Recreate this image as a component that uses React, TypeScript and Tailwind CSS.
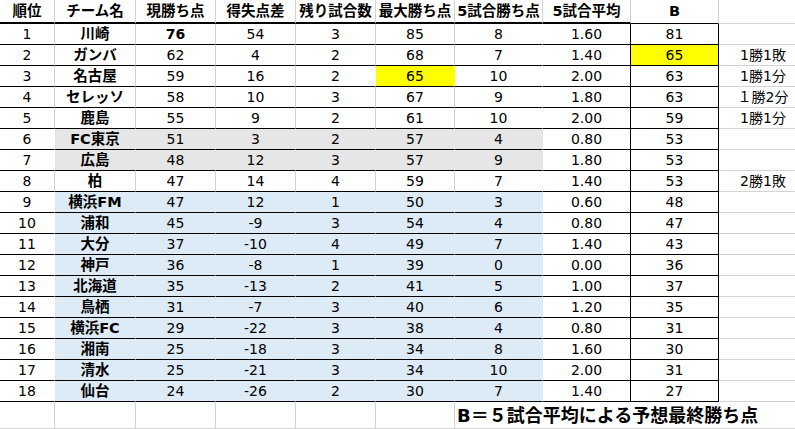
import React from 'react';

type Fill = 'white' | 'grey' | 'blue' | 'yellow';

interface TeamRow {
  rank: number;
  team: string;
  points: number;
  goalDiff: number;
  remaining: number;
  maxPoints: number;
  last5Points: number;
  last5Avg: string;
  projected: number;
  note?: string;
  fill: Fill;
  boldPoints?: boolean;
  yellowMax?: boolean;
  yellowProjected?: boolean;
}

const rows: TeamRow[] = [
  { rank: 1, team: '川崎', points: 76, goalDiff: 54, remaining: 3, maxPoints: 85, last5Points: 8, last5Avg: '1.60', projected: 81, fill: 'white', boldPoints: true },
  { rank: 2, team: 'ガンバ', points: 62, goalDiff: 4, remaining: 2, maxPoints: 68, last5Points: 7, last5Avg: '1.40', projected: 65, note: '1勝1敗', fill: 'white', yellowProjected: true },
  { rank: 3, team: '名古屋', points: 59, goalDiff: 16, remaining: 2, maxPoints: 65, last5Points: 10, last5Avg: '2.00', projected: 63, note: '1勝1分', fill: 'white', yellowMax: true },
  { rank: 4, team: 'セレッソ', points: 58, goalDiff: 10, remaining: 3, maxPoints: 67, last5Points: 9, last5Avg: '1.80', projected: 63, note: '１勝2分', fill: 'white' },
  { rank: 5, team: '鹿島', points: 55, goalDiff: 9, remaining: 2, maxPoints: 61, last5Points: 10, last5Avg: '2.00', projected: 59, note: '1勝1分', fill: 'white' },
  { rank: 6, team: 'FC東京', points: 51, goalDiff: 3, remaining: 2, maxPoints: 57, last5Points: 4, last5Avg: '0.80', projected: 53, fill: 'grey' },
  { rank: 7, team: '広島', points: 48, goalDiff: 12, remaining: 3, maxPoints: 57, last5Points: 9, last5Avg: '1.80', projected: 53, fill: 'grey' },
  { rank: 8, team: '柏', points: 47, goalDiff: 14, remaining: 4, maxPoints: 59, last5Points: 7, last5Avg: '1.40', projected: 53, note: '2勝1敗', fill: 'white' },
  { rank: 9, team: '横浜FM', points: 47, goalDiff: 12, remaining: 1, maxPoints: 50, last5Points: 3, last5Avg: '0.60', projected: 48, fill: 'blue' },
  { rank: 10, team: '浦和', points: 45, goalDiff: -9, remaining: 3, maxPoints: 54, last5Points: 4, last5Avg: '0.80', projected: 47, fill: 'blue' },
  { rank: 11, team: '大分', points: 37, goalDiff: -10, remaining: 4, maxPoints: 49, last5Points: 7, last5Avg: '1.40', projected: 43, fill: 'blue' },
  { rank: 12, team: '神戸', points: 36, goalDiff: -8, remaining: 1, maxPoints: 39, last5Points: 0, last5Avg: '0.00', projected: 36, fill: 'blue' },
  { rank: 13, team: '北海道', points: 35, goalDiff: -13, remaining: 2, maxPoints: 41, last5Points: 5, last5Avg: '1.00', projected: 37, fill: 'blue' },
  { rank: 14, team: '鳥栖', points: 31, goalDiff: -7, remaining: 3, maxPoints: 40, last5Points: 6, last5Avg: '1.20', projected: 35, fill: 'blue' },
  { rank: 15, team: '横浜FC', points: 29, goalDiff: -22, remaining: 3, maxPoints: 38, last5Points: 4, last5Avg: '0.80', projected: 31, fill: 'blue' },
  { rank: 16, team: '湘南', points: 25, goalDiff: -18, remaining: 3, maxPoints: 34, last5Points: 8, last5Avg: '1.60', projected: 30, fill: 'blue' },
  { rank: 17, team: '清水', points: 25, goalDiff: -21, remaining: 3, maxPoints: 34, last5Points: 10, last5Avg: '2.00', projected: 31, fill: 'blue' },
  { rank: 18, team: '仙台', points: 24, goalDiff: -26, remaining: 2, maxPoints: 30, last5Points: 7, last5Avg: '1.40', projected: 27, fill: 'blue' },
];

const headers = ['順位', 'チーム名', '現勝ち点', '得失点差', '残り試合数', '最大勝ち点', '5試合勝ち点', '5試合平均', 'B'];

const bgClass: Record<Fill, string> = {
  white: 'bg-white',
  grey: 'bg-[#e7e6e6]',
  blue: 'bg-[#ddebf7]',
  yellow: 'bg-[#ffff00]',
};

// which fill a cell gets; col 0 and col 7 are always white in the sheet
const cellFill = (row: TeamRow, col: number): Fill => {
  if (col === 5 && row.yellowMax) return 'yellow';
  if (col === 8) return row.yellowProjected ? 'yellow' : 'white';
  if (col >= 1 && col <= 6) return row.fill;
  return 'white';
};

// excel hides a gridline when either neighbour is filled
const rightLine = (row: TeamRow, col: number) => {
  if (col === 7 || col === 8) return 'border-r-black';
  if (col === 6 || col === 9) return 'border-r-transparent';
  return cellFill(row, col) === 'white' && cellFill(row, col + 1) === 'white'
    ? 'border-r-[#d4d4d4]'
    : 'border-r-transparent';
};

const App: React.FC = () => {
  return (
    <div className="w-[795px] h-[429px] overflow-hidden bg-white text-black text-[14px] font-[family-name:'DejaVu_Sans','Noto_Sans_CJK_JP',sans-serif]">
      <div className="grid grid-cols-[55px_81px_80px_80px_80px_79px_88px_88px_88px_76px]">
        {headers.map((h, i) => (
          <div
            key={h}
            className={`h-[24px] pt-[1px] flex items-center justify-center font-bold text-[14.5px] whitespace-nowrap border-r border-r-[#d4d4d4] ${
              i === 8 ? 'border-b border-b-black' : 'border-b-2 border-b-black'
            }`}
          >
            {h}
          </div>
        ))}
        <div className="h-[24px] border-b border-b-[#d4d4d4]" />

        {rows.map((row) => {
          const values: React.ReactNode[] = [
            row.rank,
            <span className="font-bold text-[14.5px]">{row.team}</span>,
            <span className={row.boldPoints ? 'font-bold' : ''}>{row.points}</span>,
            row.goalDiff,
            row.remaining,
            row.maxPoints,
            row.last5Points,
            row.last5Avg,
            row.projected,
          ];
          return (
            <React.Fragment key={row.rank}>
              {values.map((v, col) => (
                <div
                  key={col}
                  className={`h-[21px] pt-[1px] flex items-center justify-center whitespace-nowrap border-r border-b border-b-black ${bgClass[cellFill(row, col)]} ${rightLine(row, col)}`}
                >
                  {v}
                </div>
              ))}
              <div className="h-[21px] pt-[1px] pl-3 flex items-center justify-center whitespace-nowrap border-b border-b-[#d4d4d4]">
                {row.note}
              </div>
            </React.Fragment>
          );
        })}

        {[0, 1, 2, 3, 4, 5].map((col) => (
          <div key={col} className="h-[27px] border-r border-b border-[#d4d4d4]" />
        ))}
        <div className="col-span-4 h-[27px] pl-[2px] flex items-center border-b border-b-[#d4d4d4] font-bold text-[18px] whitespace-nowrap">
          B＝５試合平均による予想最終勝ち点
        </div>
      </div>
    </div>
  );
};

export default App;
